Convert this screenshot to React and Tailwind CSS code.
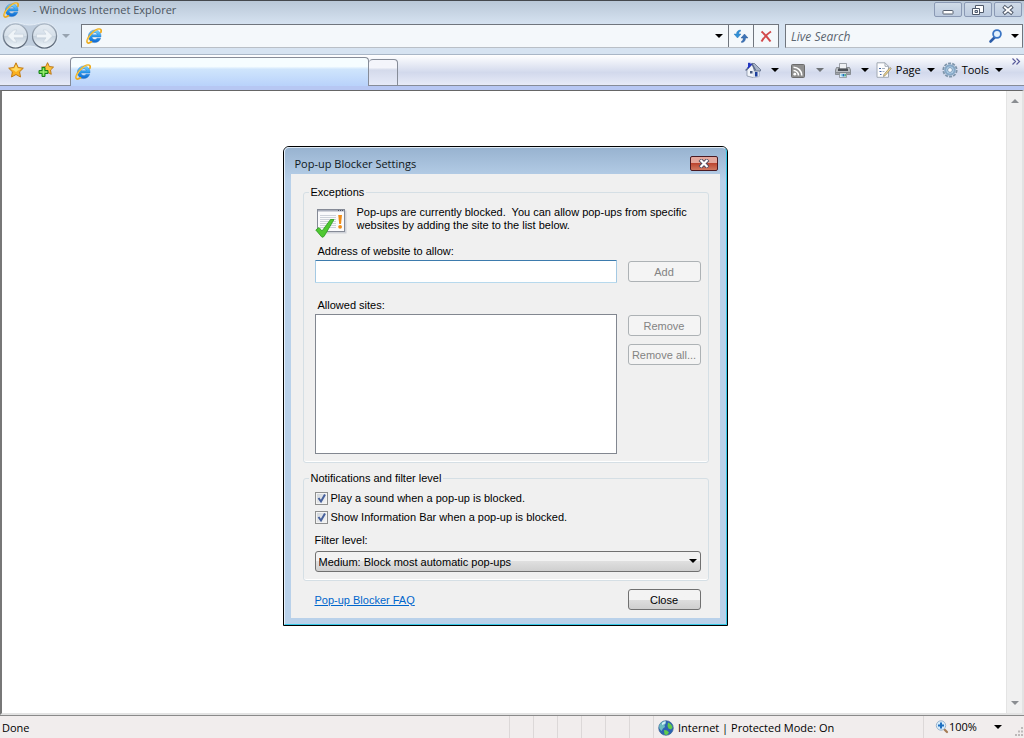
import React, { useState } from 'react'
import clsx from 'clsx'

function IeLogo() {
  return (
    <svg viewBox="0 0 16 16" className="w-4 h-4 shrink-0">
      <defs>
        <linearGradient id="ieBlue" x1="0" y1="0" x2="0" y2="1">
          <stop offset="0" stopColor="#7fd6fb" />
          <stop offset="0.55" stopColor="#2595ec" />
          <stop offset="1" stopColor="#1166cc" />
        </linearGradient>
      </defs>
      <path d="M8.8 2a6.200 6.200 0 0 0-.2 12.600c2.900 0 5.200-1.600 6.100-4.400h-3.700c-.5.900-1.300 1.300-2.300 1.300-1.500 0-2.600-1-2.700-2.500h9C15.300 4.900 12.700 2 8.800 2zM6.100 6.700c.3-1.200 1.300-2 2.600-2s2.300.8 2.500 2z" fill="url(#ieBlue)" stroke="#1a70c4" strokeWidth="0.4" />
      <path d="M14.900 4.300c.6-1.800.3-3.200-1.200-3.300C11.500.8 7.500 3.200 4.600 6.500 1.600 9.900.3 13.600 1.500 14.700c.8.700 2.300.2 4-.9" fill="none" stroke="#eba91c" strokeWidth="1.700" strokeLinecap="round" />
      <path d="M14 1.300C11.700.9 7.700 3.500 4.900 6.700 2.500 9.500 1.300 12 1.500 13.700" fill="none" stroke="#fbdc6c" strokeWidth="0.700" />
    </svg>
  )
}

function Caret({ className }) {
  return (
    <svg viewBox="0 0 8 4" className={clsx('w-2 h-1 shrink-0', className)} fill="currentColor">
      <path d="M0 0h8L4 4z" />
    </svg>
  )
}

function NavArrows() {
  return (
    <svg viewBox="0 0 60 30" className="w-[60px] h-[30px] shrink-0">
      <defs>
        <linearGradient id="orb" x1="0" y1="0" x2="0" y2="1">
          <stop offset="0" stopColor="#e4ebf2" />
          <stop offset="0.48" stopColor="#d6e0ea" />
          <stop offset="0.5" stopColor="#c5d1dd" />
          <stop offset="1" stopColor="#f2f8fc" />
        </linearGradient>
        <linearGradient id="ring" x1="0" y1="0" x2="0" y2="1">
          <stop offset="0" stopColor="#a8b4c1" />
          <stop offset="1" stopColor="#566272" />
        </linearGradient>
      </defs>
      <path d="M15 1.500c6 0 8 2.500 14.500 2.500S39 1.500 44.500 1.500a13.500 13.500 0 0 1 0 27C39 28.500 36 25 29.500 25S21 28.500 15 28.500a13.500 13.500 0 0 1 0-27z" fill="#c0cede" stroke="#e4edf6" />
      <circle cx="15.500" cy="15" r="12" fill="url(#orb)" stroke="url(#ring)" strokeWidth="1.200" />
      <circle cx="44.500" cy="15" r="12" fill="url(#orb)" stroke="url(#ring)" strokeWidth="1.200" />
      <path d="M7.500 15l6-6h3.500l-3 4.200h9.500v3.600H14l3 4.200h-3.500z" fill="#eff4f8" stroke="#bfcbd7" strokeWidth="0.500" />
      <path d="M52.500 15l-6-6H43l3 4.200h-9.500v3.600H46L43 21h3.500z" fill="#eff4f8" stroke="#bfcbd7" strokeWidth="0.500" />
    </svg>
  )
}

const STAR = 'M8 .8l2.200 4.700 5.100.7-3.700 3.600.9 5.200L8 12.500 3.500 15l.9-5.200L.7 6.200l5.100-.7z'

function StarIcon() {
  return (
    <svg viewBox="0 0 16 16" className="w-4 h-4">
      <path d={STAR} fill="#fbb11e" stroke="#c07a14" strokeWidth="1" strokeLinejoin="round" />
      <path d="M8 2.500l1.600 3.800 4 .5-3.600 1.700L8 10 6 8.500 2.400 6.800l4-.5z" fill="#ffdb66" />
    </svg>
  )
}

function AddStarIcon() {
  return (
    <svg viewBox="0 0 16 16" className="w-4 h-4">
      <g transform="translate(3 0) scale(.82)">
        <path d={STAR} fill="#fbc13a" stroke="#b9700e" strokeWidth="1.100" strokeLinejoin="round" />
      </g>
      <path d="M4 5.500h3v3h3v3H7v3H4v-3H1v-3h3z" fill="#5fd03c" stroke="#16831a" />
      <path d="M5.500 6.500v7M2 10h7" stroke="#a6ee84" strokeWidth="0.800" />
    </svg>
  )
}

function RefreshIcon() {
  return (
    <svg viewBox="0 0 16 16" className="w-4 h-4">
      <path d="M7.500 2C5 2.200 3.500 3.500 3.500 6H1l3.500 4L8 6H5.800c0-1.500.4-2.300 1.700-2.800z" fill="#2f8fd6" stroke="#1f70b4" strokeWidth="0.400" />
      <path d="M8.500 14.500c2.500-.2 4-1.500 4-4.500H15l-3.500-4L8 10h2.200c0 1.800-.4 2.800-1.700 3.300z" fill="#3d74b8" stroke="#1d4c8c" strokeWidth="0.400" />
    </svg>
  )
}

function StopIcon() {
  return (
    <svg viewBox="0 0 16 16" className="w-4 h-4">
      <path d="M3.500 3.500c3 2.500 6 6 9 10M13 3.500C9 6 6 9.500 3.500 13.500" fill="none" stroke="#d2484a" strokeWidth="2" />
    </svg>
  )
}

function SearchIcon() {
  return (
    <svg viewBox="0 0 16 16" className="w-4 h-4 shrink-0">
      <path d="M6.500 9.500L2.500 13.500" stroke="#2b5ca8" strokeWidth="2.600" strokeLinecap="round" />
      <circle cx="9" cy="6" r="3.900" fill="#e4f2fd" stroke="#3a75c4" strokeWidth="1.800" />
    </svg>
  )
}

function HomeIcon() {
  return (
    <svg viewBox="0 0 16 16" className="w-4 h-4">
      <path d="M3 .8h2.500V5H3z" fill="#2338c0" />
      <path d="M2 8l5-5.500L12 7l2 1v6.500l-6 1-6-1.500z" fill="#f2f5fa" stroke="#7b879c" strokeWidth="0.700" />
      <path d="M7.500 8.500H14v6l-6 1z" fill="#dbe2ec" />
      <path d="M7 1.500h2.500l6 6V9H9.500z" fill="#a9b5c8" stroke="#51607c" strokeWidth="0.700" />
      <path d="M.6 8.500L7 1.800l3.500 6.500" fill="none" stroke="#56668a" strokeWidth="1.300" />
      <path d="M6.500 2L2.800 6" stroke="#1c2ed0" strokeWidth="1.300" />
      <path d="M5 9h2.500v2.500H5z" fill="#45587e" />
      <path d="M10 10h2.500v4.500H10z" fill="#1c3f9c" />
    </svg>
  )
}

function FeedIcon() {
  return (
    <svg viewBox="0 0 16 16" className="w-4 h-4">
      <rect x="1.500" y="2.500" width="13" height="13" rx="1" fill="#8f8f8f" stroke="#6c6c6c" />
      <circle cx="4.800" cy="12.200" r="1.400" fill="#fff" />
      <path d="M3.500 8.500a5 5 0 0 1 5 5M3.500 5.200a8.300 8.300 0 0 1 8.300 8.300" fill="none" stroke="#fff" strokeWidth="1.600" />
    </svg>
  )
}

function PrinterIcon() {
  return (
    <svg viewBox="0 0 16 16" className="w-4 h-4">
      <path d="M4.500 1.500h7V7h-7z" fill="#eef0f3" stroke="#888d94" strokeWidth="0.800" />
      <path d="M1.500 5.500h3v2h7v-2h3l1 2.500v4.500H.5V8z" fill="#b9bdc2" stroke="#777c82" strokeWidth="0.800" />
      <path d="M3 6.500h10V9H3z" fill="#4b4f55" />
      <path d="M1 10h14v1.500H1z" fill="#85898f" />
      <path d="M4.500 11h7v4.500h-7z" fill="#fff" stroke="#7b838b" strokeWidth="0.700" />
      <path d="M5.500 12h2v2.500h-2z" fill="#8ed2ee" />
      <path d="M7.500 12h2v2.500h-2z" fill="#1d6cb8" />
      <path d="M9.500 12h1.500v2.500H9.500z" fill="#54b48c" />
    </svg>
  )
}

function PageIcon() {
  return (
    <svg viewBox="0 0 16 16" className="w-4 h-4">
      <path d="M1 .8h8l3.500 3.500v11H1z" fill="#fdfdfe" stroke="#a0a8b3" />
      <path d="M9 .8v3.500h3.500" fill="none" stroke="#a0a8b3" />
      <path d="M3 6.500h2M3.500 9.500h2M4 12.500h1.500" stroke="#4768a8" strokeWidth="1.200" />
      <path d="M6 6.500h3M6.500 9.500h2" stroke="#a8b2be" />
      <path d="M15.300 6.500l-6 7-1.800 1 .4-2 6-7z" fill="#efd48a" stroke="#8c8468" strokeWidth="0.700" />
    </svg>
  )
}

function GearIcon() {
  return (
    <svg viewBox="0 0 16 16" className="w-4 h-4">
      <circle cx="8" cy="8" r="6.700" fill="none" stroke="#7f95aa" strokeWidth="1.800" strokeDasharray="3 1.200" />
      <circle cx="8" cy="8" r="4.700" fill="#bcd8ee" stroke="#86a8c6" strokeWidth="2.200" />
      <circle cx="8" cy="8" r="2.400" fill="#f4f8fc" stroke="#6f90b0" strokeWidth="0.900" />
    </svg>
  )
}

function GlobeIcon() {
  return (
    <svg viewBox="0 0 16 16" className="w-4 h-4 shrink-0">
      <circle cx="8" cy="8" r="7.300" fill="#2c62b4" stroke="#3c6694" strokeWidth="0.700" />
      <path d="M2 4c1.500-2 3.500-3 5.500-3L8 3.500 6.500 5 7 7 5 8.500 3.500 11 1.300 8.500C1 6.500 1.300 5 2 4z" fill="#6cbcc0" />
      <path d="M10 2.500c2 .5 4 2.500 4.600 5L13 9.500 10.500 8.500 9.500 6zM6 10l3 .5 2 2-2 2.500-2.500-.5z" fill="#62cc4c" />
      <path d="M4 3c1.500-1.200 3-1.500 4-1.400L6.500 4 4 5z" fill="#d3eef8" />
    </svg>
  )
}

function ZoomIcon() {
  return (
    <svg viewBox="0 0 14 14" className="w-3.5 h-3.5 shrink-0">
      <path d="M8.500 8.500l3.500 3.500" stroke="#a47b54" strokeWidth="2.200" strokeLinecap="round" />
      <circle cx="6" cy="5.500" r="4.700" fill="#d7ecfb" stroke="#9db4cc" />
      <path d="M6 2.500v6M3 5.500h6" stroke="#1d6fc0" strokeWidth="2" />
    </svg>
  )
}

function BlockedPopupIcon() {
  return (
    <svg viewBox="0 0 32 32" className="w-8 h-8 shrink-0">
      <rect x="3.500" y="4.500" width="28" height="23" fill="#cfd2d8" />
      <rect x="2.500" y="3.500" width="27" height="22" fill="#fafafc" stroke="#858a96" />
      <path d="M3 4h26v1.500H3z" fill="#a8adbb" />
      <path d="M23 4.500h1M25 4.500h1M27 4.500h1" stroke="#50566a" />
      <path d="M5 9.500h16M5 11.500h16M5 13.500h16M5 15.500h16M5 17.500h16M5 19.500h16M5 21.500h16" stroke="#ced2da" />
      <path d="M23.200 9h3.800l-1 9h-1.800z" fill="#f08c16" />
      <circle cx="25.100" cy="20.800" r="1.900" fill="#f08c16" />
      <path d="M.8 24L4 21.500l3 3.500 8.500-11.500h3.500L9 30.500l-2 .8z" fill="#4fc832" stroke="#2a9a1c" strokeWidth="0.800" />
    </svg>
  )
}

function WindowButton({ label, children }) {
  return (
    <button type="button" aria-label={label} className="w-7 h-[15px] flex items-center justify-center rounded-[2px] border border-[#8a99b4] bg-linear-to-b from-[#cfdae7] to-[#bccbdf]">
      <svg viewBox="0 0 14 12" className="w-3.5 h-3">{children}</svg>
    </button>
  )
}

function TitleBar() {
  return (
    <header className="h-5 flex items-start justify-between pl-[3px] pr-0.5 border-t border-[#45484d]">
      <div className="flex items-center gap-3.5 text-[#4c5560]">
        <IeLogo />
        <h1 className="leading-[18px]">- Windows Internet Explorer</h1>
      </div>
      <div className="flex gap-0.5 pt-px">
        <WindowButton label="Minimize">
          <rect x="2" y="6.500" width="10" height="3.500" rx="0.500" fill="#fff" stroke="#56606f" />
        </WindowButton>
        <WindowButton label="Restore">
          <path d="M4.500 1.500h8v7h-8z" fill="#fff" stroke="#505a6a" />
          <path d="M1.500 4.500h7v6h-7z" fill="#fff" stroke="#505a6a" />
          <path d="M4 6.500h2.500V8.500H4z" fill="#c3d1e1" stroke="#505a6a" />
        </WindowButton>
        <WindowButton label="Close">
          <path d="M2.500 2.200l9 7.600M11.500 2.200l-9 7.600" stroke="#505a6a" strokeWidth="3.800" />
          <path d="M3.200 2.800l7.600 6.400M10.800 2.800l-7.600 6.400" stroke="#fff" strokeWidth="1.800" />
        </WindowButton>
      </div>
    </header>
  )
}

function AddressBar() {
  return (
    <div className="h-[34px] flex items-center pb-0.5">
      <NavArrows />
      <Caret className="ml-0.5 text-[#97a3b0]" />
      <div className="ml-[11px] flex-1 h-6 flex items-center bg-[#f4f8fb] border border-[#70767e] border-b-[#b9bfc6]">
        <div className="pl-1"><IeLogo /></div>
        <input type="text" aria-label="Address" className="flex-1 min-w-0 h-full px-1 outline-none" />
        <button type="button" aria-label="Show addresses" className="w-[19px] h-full flex items-center justify-center"><Caret /></button>
        <button type="button" aria-label="Refresh" className="w-[25px] h-full flex items-center justify-center border-l border-[#70767e]"><RefreshIcon /></button>
        <button type="button" aria-label="Stop" className="w-[25px] h-full flex items-center justify-center border-l border-[#70767e]"><StopIcon /></button>
      </div>
      <div className="ml-1.5 mr-px w-[238px] h-6 flex items-center bg-[#f4f8fb] border border-[#70767e] border-b-[#b9bfc6]">
        <input type="search" aria-label="Live Search" placeholder="Live Search" className="flex-1 min-w-0 h-full pl-[5px] text-[12px] italic outline-none placeholder:text-[#5b6570]" />
        <button type="button" aria-label="Search"><SearchIcon /></button>
        <button type="button" aria-label="Search options" className="ml-1 w-3.5 h-full flex items-center justify-center"><Caret /></button>
      </div>
    </div>
  )
}

function ToolButton({ label, text, icon, disabled, className }) {
  return (
    <button type="button" aria-label={label} disabled={disabled} className={clsx('flex items-center', className)}>
      {icon}
      {text && <span className="ml-1">{text}</span>}
      <Caret className={clsx(text ? 'ml-1.5' : 'ml-2.5', disabled && 'text-[#6f7377]')} />
    </button>
  )
}

function TabRow() {
  return (
    <div className="border-t border-[#a9b6c6] bg-linear-to-b from-white via-[#d2d9ec] to-[#f0f2fc]">
      <div className="h-[31px] flex">
        <div className="w-[70px] flex items-center gap-3.5 pl-2 border-b border-[#868c98]">
          <button type="button" aria-label="Favorites Center"><StarIcon /></button>
          <button type="button" aria-label="Add to Favorites"><AddStarIcon /></button>
        </div>
        <button type="button" aria-label="Current tab" className="mt-0.5 w-[299px] flex items-center pl-1 rounded-t border border-b-0 border-[#868c98] bg-linear-to-b from-[#f6fdff] from-30% via-[#cfe5fc] via-40% to-[#b9d2fb]">
          <IeLogo />
        </button>
        <button type="button" aria-label="New tab" className="mt-1 w-[29px] rounded-t border border-l-0 border-[#868c98] bg-linear-to-b from-[#f4f5fb] from-30% via-[#d4daeb] via-40% to-[#e6eaf8]" />
        <div className="flex-1 flex items-center justify-end border-b border-[#868c98]">
          <ToolButton label="Home" icon={<HomeIcon />} />
          <ToolButton label="Feeds" icon={<FeedIcon />} disabled className="ml-[11px]" />
          <ToolButton label="Print" icon={<PrinterIcon />} className="ml-[11px]" />
          <ToolButton label="Page" text="Page" icon={<PageIcon />} className="ml-[7px]" />
          <ToolButton label="Tools" text="Tools" icon={<GearIcon />} className="ml-[7px]" />
          <button type="button" aria-label="More tools" className="self-start mt-[3px] ml-2 mr-[3px]">
            <svg viewBox="0 0 10 7" className="w-2.5 h-[7px]" fill="none" stroke="#5a5c9c" strokeWidth="1.200">
              <path d="M1.500 .5l3 3-3 3M5.500 .5l3 3-3 3" />
            </svg>
          </button>
        </div>
      </div>
      <div className="h-1 bg-[#b7c7f3]" />
    </div>
  )
}

function DialogButton({ disabled, children, onClick }) {
  return (
    <button
      type="button"
      disabled={disabled}
      onClick={onClick}
      className={clsx(
        'w-[73px] h-[21px] rounded-[3px] border text-center',
        disabled
          ? 'border-[#adb2b5] bg-[#f4f4f4] text-[#838383]'
          : 'border-[#707070] bg-linear-to-b from-[#f3f3f3] from-50% via-[#dedede] via-50% to-[#cfcfcf]'
      )}
    >
      {children}
    </button>
  )
}

function CheckRow({ id, label }) {
  const [on, setOn] = useState(true)
  return (
    <div className="flex items-center gap-[3px]">
      <span className="relative w-[13px] h-[13px]">
        <input
          id={id}
          type="checkbox"
          checked={on}
          onChange={e => setOn(e.target.checked)}
          className="peer block appearance-none w-[13px] h-[13px] border border-[#8e8f8f] bg-linear-to-br from-[#cdd2d8] to-[#f8f8f8] outline outline-1 -outline-offset-2 outline-[#f4f4f4]"
        />
        <svg viewBox="0 0 13 13" className="hidden peer-checked:block absolute inset-0 pointer-events-none" fill="none" stroke="#46609c" strokeWidth="2">
          <path d="M3.500 6l2.500 3.500L10 2.500" />
        </svg>
      </span>
      <label htmlFor={id}>{label}</label>
    </div>
  )
}

function Group({ title, className, children }) {
  return (
    <fieldset className={clsx('rounded-[3px] border border-[#d5dfe5] pl-[11px] pr-[7px] shadow-[inset_0_-1px_0_#fff]', className)}>
      <legend className="-ml-1.5 px-0.5">{title}</legend>
      {children}
    </fieldset>
  )
}

function PopupBlockerDialog() {
  return (
    <section role="dialog" aria-label="Pop-up Blocker Settings" className="w-[445px] rounded-t-md border border-black bg-[#b9d1ea]">
      <div className="rounded-t-[5px] border border-t-[#dfeaf4] border-l-[#e6f0fa] border-r-[#35c8e6] border-b-[#35c8e6] px-1.5 pb-1.5 bg-linear-to-b from-[#98b3d0] to-[#b9d1ea] to-7%">
        <div className="h-[26px] flex items-center justify-between pl-1 pr-0.5 pt-1">
          <h2 className="pt-0.5 text-[#101820]">Pop-up Blocker Settings</h2>
          <button type="button" aria-label="Close dialog" className="w-7 h-[15px] flex items-center justify-center rounded-[2px] border border-[#4a1a22] bg-linear-to-b from-[#e4a79c] from-45% via-[#bc4530] via-50% to-[#d07860]">
            <svg viewBox="0 0 12 9" className="w-3 h-[9px]">
              <path d="M2 .5l8 8M10 .5l-8 8" stroke="#4d4a5e" strokeWidth="4" />
              <path d="M2.500 1l7 7M9.500 1l-7 7" stroke="#fff" strokeWidth="2.200" />
            </svg>
          </button>
        </div>

        <div className="bg-[#f0f0f0] pl-3 pr-[11px] pt-[11px] pb-2 font-['Liberation_Sans',Arial,sans-serif] text-[11px] leading-[14px]">
          <Group title="Exceptions" className="pb-2">
            <div className="flex gap-2.5 pt-[7px]">
              <BlockedPopupIcon />
              <p className="leading-[13px] whitespace-pre-line">
                {'Pop-ups are currently blocked.\u00a0 You can allow pop-ups from specific\nwebsites by adding the site to the list below.'}
              </p>
            </div>
            <label htmlFor="address" className="block mt-1.5 pl-[3px]">Address of website to allow:</label>
            <div className="mt-0.5 flex items-center gap-[11px]">
              <input id="address" type="text" className="flex-1 min-w-0 h-[23px] px-1 rounded-[1px] border border-t-[#3d7bad] border-x-[#a4c9e3] border-b-[#b7d9ed] bg-white outline-none" />
              <DialogButton disabled>Add</DialogButton>
            </div>
            <label htmlFor="sites" className="block mt-[15px] pl-[3px]">Allowed sites:</label>
            <div className="mt-0.5 flex gap-[11px]">
              <select id="sites" multiple className="flex-1 min-w-0 h-[140px] appearance-none border border-[#828790] bg-white outline-none" />
              <div className="flex flex-col gap-2 pt-px">
                <DialogButton disabled>Remove</DialogButton>
                <DialogButton disabled>Remove all...</DialogButton>
              </div>
            </div>
          </Group>

          <Group title="Notifications and filter level" className="mt-2 pb-2">
            <div className="flex flex-col gap-[5px] pt-1.5">
              <CheckRow id="sound" label="Play a sound when a pop-up is blocked." />
              <CheckRow id="infobar" label="Show Information Bar when a pop-up is blocked." />
            </div>
            <label htmlFor="level" className="block mt-[9px]">Filter level:</label>
            <div className="relative mt-1">
              <select id="level" defaultValue="medium" className="block w-full h-[21px] appearance-none rounded-[3px] border border-[#707070] pl-[3px] bg-linear-to-b from-[#f2f2f2] from-50% via-[#dfdfdf] via-50% to-[#cfcfcf]">
                <option value="high">High: Block all pop-ups</option>
                <option value="medium">Medium: Block most automatic pop-ups</option>
                <option value="low">Low: Allow pop-ups from secure sites</option>
              </select>
              <Caret className="absolute right-1 top-2 pointer-events-none" />
            </div>
          </Group>

          <div className="mt-2 flex items-center justify-between pl-3 pr-2">
            <a href="#faq" className="text-[#0066cc] underline">Pop-up Blocker FAQ</a>
            <DialogButton>Close</DialogButton>
          </div>
        </div>
      </div>
    </section>
  )
}

function ScrollTrack() {
  return (
    <div className="w-4 flex flex-col items-center justify-between py-2 bg-[#f0f0f0] border-l border-[#e4e4e4] text-[#8a8d91]">
      <Caret className="rotate-180" />
      <Caret />
    </div>
  )
}

function StatusBar() {
  return (
    <footer className="h-[23px] flex items-stretch border-t border-[#8a8a8a] bg-[#f1eded]">
      <div className="flex-1 flex items-center pl-0.5 pt-0.5">Done</div>
      {[0, 1, 2, 3, 4, 5].map(i => <div key={i} className="w-6 border-l border-[#dcd8d8]" />)}
      <div className="w-[270px] flex items-center gap-1 pl-1 pt-0.5 border-l border-[#dcd8d8]">
        <GlobeIcon />
        <span>Internet | Protected Mode: On</span>
      </div>
      <div className="w-[101px] flex items-center pl-[11px] border-l border-[#dcd8d8]">
        <ZoomIcon />
        <button type="button" className="flex-1 flex items-center justify-between">
          100%
          <Caret />
        </button>
        <svg viewBox="0 0 10 10" className="self-end w-2.5 h-2.5 ml-3 mb-px" fill="#bdb9b9">
          <path d="M7 0h2v2H7zM4 3.500h2v2H4zM7 3.500h2v2H7zM1 7h2v2H1zM4 7h2v2H4zM7 7h2v2H7z" />
        </svg>
      </div>
    </footer>
  )
}

export default function App() {
  return (
    <div className="min-h-screen flex flex-col bg-[#d6e3f1] font-['Open_Sans','Noto_Sans',sans-serif] text-[11px] leading-4 text-black">
      <div className="bg-linear-to-b from-[#b8c6d6] to-[#d6e3f1] to-45%">
        <TitleBar />
        <AddressBar />
      </div>
      <TabRow />
      <main className="flex-1 flex border-t border-l-2 border-r-2 border-b-2 border-t-[#666] border-l-[#777] border-r-[#e3e3e3] border-b-[#e3e3e3] bg-white">
        <div className="flex-1 flex justify-center items-start pl-0.5 pt-[55px] pb-4">
          <PopupBlockerDialog />
        </div>
        <ScrollTrack />
      </main>
      <StatusBar />
    </div>
  )
}
